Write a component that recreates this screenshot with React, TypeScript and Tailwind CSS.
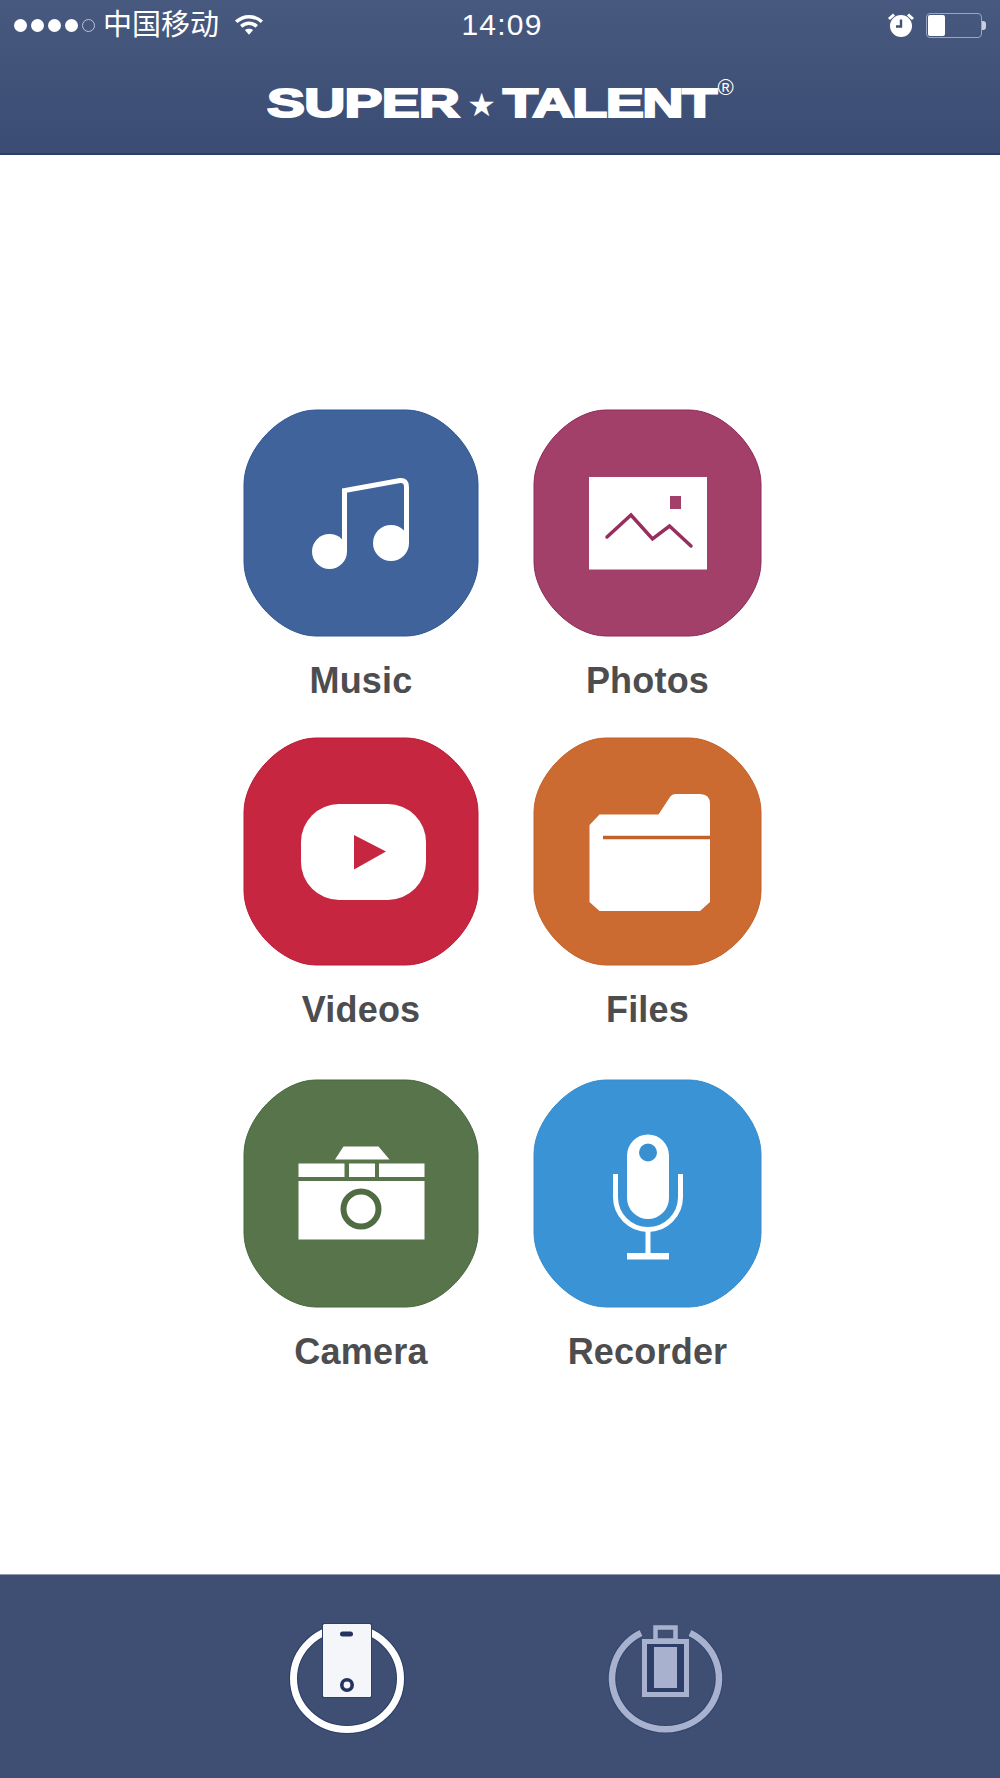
import React from "react";

function tilePath(w: number, h: number) {
  return `M73 1H${w - 73}C${w - 38} 1 ${w - 1} 40 ${w - 1} 75V${h - 75}C${w - 1} ${h - 40} ${w - 38} ${h - 1} ${w - 73} ${h - 1}H73C38 ${h - 1} 1 ${h - 40} 1 ${h - 75}V75C1 40 38 1 73 1Z`;
}

function Tile({ w, h, fill, edge, children }: { w: number; h: number; fill: string; edge: string; children: React.ReactNode }) {
  return (
    <svg width={w} height={h} viewBox={`0 0 ${w} ${h}`} className="block shrink-0">
      <path d={tilePath(w, h)} fill={fill} stroke={edge} strokeWidth="1" />
      {children}
    </svg>
  );
}

function Item({ label, w, children }: { label: string; w: number; children: React.ReactNode }) {
  return (
    <div className="flex flex-col items-center" style={{ width: w }}>
      {children}
      <div className="mt-[25px] text-[36px] leading-[38px] font-bold tracking-[0.2px] text-[#4d4d4f] whitespace-nowrap">{label}</div>
    </div>
  );
}

export default function App() {
  return (
    <div className="flex h-[1778px] w-[1000px] flex-col bg-white [font-family:'Liberation_Sans','Noto_Sans_CJK_SC',sans-serif]">
      <header className="h-[155px] shrink-0 border-b-2 border-[#2b3d6b] bg-gradient-to-b from-[#48597f] to-[#3b4c74] text-white">
        <div className="grid h-[50px] grid-cols-3 items-center px-[14px]">
          <div className="flex items-center">
            <div className="flex items-center gap-[4px]">
              <span className="h-[13px] w-[13px] rounded-full bg-white" />
              <span className="h-[13px] w-[13px] rounded-full bg-white" />
              <span className="h-[13px] w-[13px] rounded-full bg-white" />
              <span className="h-[13px] w-[13px] rounded-full bg-white" />
              <span className="h-[13px] w-[13px] rounded-full border border-[#b9c1d6]" />
            </div>
            <span className="ml-[8px] text-[29px] leading-[34px]">中国移动</span>
            <svg width="30" height="22" viewBox="0 0 32 24" className="ml-[15px]" fill="none" stroke="white" strokeWidth="3.8">
              <path d="M2 8.5C10 1 22 1 30 8.5" />
              <path d="M7.5 13.5C12.5 9 19.5 9 24.5 13.5" />
              <path d="M16 22.5L11.5 17.5C14 15.6 18 15.6 20.5 17.5Z" fill="white" stroke="none" />
            </svg>
          </div>
          <div className="pl-[4px] text-center text-[30px] leading-[34px] tracking-[1.2px]">14:09</div>
          <div className="flex items-center justify-end">
            <svg width="28" height="26" viewBox="0 0 28 26" className="mr-[11px]">
              <circle cx="14" cy="14" r="11" fill="white" />
              <path d="M14 7.5V14.5H9" fill="none" stroke="#3f5079" strokeWidth="2.4" />
              <path d="M2 7L7 2.5M26 7L21 2.5" stroke="white" strokeWidth="3" />
            </svg>
            <div className="flex items-center">
              <div className="h-[25px] w-[56px] rounded-[4px] border border-[#9aa5c2] p-px">
                <div className="h-full w-[17px] rounded-[2px] bg-white" />
              </div>
              <div className="h-[9px] w-[4px] rounded-r-[3px] bg-[#c9cfe0]" />
            </div>
          </div>
        </div>
        <div className="mt-[28px] flex h-[50px] items-start justify-center pl-[4px] font-bold leading-[50px]">
          <span className="inline-block w-[193px] origin-left scale-x-[1.42] text-[40px] tracking-[-0.5px] [-webkit-text-stroke:2px_white]">SUPER</span>
          <span className="ml-[7px] w-[30px] pt-[2px] text-center text-[32px] [font-family:'DejaVu_Sans',sans-serif]">★</span>
          <span className="ml-[6px] inline-block w-[213px] origin-left scale-x-[1.43] text-[40px] tracking-[-1px] [-webkit-text-stroke:2px_white]">TALENT</span>
          <span className="-mt-[15px] ml-[2px] w-[20px] text-[22px] font-normal">®</span>
        </div>
      </header>

      <main className="flex-1 pt-[254px] pl-[243px]">
        <div className="grid grid-cols-[236px_229px] grid-rows-[328px_342px_auto] gap-x-[54px]">
          <Item label="Music" w={236}>
            <Tile w={236} h={228} fill="#41639c" edge="#2f5694">
              <circle cx="86.5" cy="142.5" r="17.5" fill="white" />
              <circle cx="148" cy="134" r="18" fill="white" />
              <path d="M101.5 143V81.5L157 71.5Q163.5 71 163.5 78V134" fill="none" stroke="white" strokeWidth="5" />
            </Tile>
          </Item>
          <Item label="Photos" w={229}>
            <Tile w={229} h={228} fill="#a2406a" edge="#8f2b59">
              <rect x="56" y="68" width="118" height="92.5" fill="white" />
              <rect x="137" y="87" width="11" height="13" fill="#a2406a" />
              <path d="M74 128L98 106L119.5 130L136.5 117L158 137" fill="none" stroke="#962f5e" strokeWidth="3.5" strokeLinecap="round" />
            </Tile>
          </Item>
          <Item label="Videos" w={236}>
            <Tile w={236} h={229} fill="#c6263f" edge="#b91b38">
              <rect x="58" y="67" width="125" height="96" rx="38" fill="white" />
              <path d="M111 98L143 114.5L111 132.5Z" fill="#c6263f" />
            </Tile>
          </Item>
          <Item label="Files" w={229}>
            <Tile w={229} h={229} fill="#cc6b31" edge="#c4602a">
              <path d="M56.5 88L66.5 77.5H125.5L137 60Q139 57 143 57H167Q177 57 177 67V165L167 174H66.5L56.5 165Z" fill="white" />
              <path d="M70 100.5H177" stroke="#c4602a" strokeWidth="3.5" />
            </Tile>
          </Item>
          <Item label="Camera" w={236}>
            <Tile w={236} h={229} fill="#58744b" edge="#48683f">
              <path d="M92 80.5L100.5 67.5H135.5L146.5 80.5Z" fill="white" />
              <rect x="55.5" y="84.5" width="46" height="13.5" fill="white" />
              <rect x="106" y="84.5" width="26" height="13.5" fill="white" />
              <rect x="136" y="84.5" width="45.5" height="13.5" fill="white" />
              <rect x="55.5" y="102" width="126" height="58.5" fill="white" />
              <circle cx="118" cy="130" r="17.5" fill="white" stroke="#4f6c43" strokeWidth="6" />
            </Tile>
          </Item>
          <Item label="Recorder" w={229}>
            <Tile w={229} h={229} fill="#3a93d4" edge="#3a8bcb">
              <rect x="94" y="55.5" width="42" height="84.5" rx="21" fill="white" />
              <circle cx="115" cy="73.5" r="9" fill="#3a8fcf" />
              <path d="M82.5 95V118A32.5 32.5 0 0 0 147.5 118V95" fill="none" stroke="white" strokeWidth="5" />
              <path d="M115 150V175" stroke="white" strokeWidth="5" />
              <rect x="94" y="174" width="42" height="6.5" fill="white" />
            </Tile>
          </Item>
        </div>
      </main>

      <footer className="flex h-[204px] shrink-0 gap-[195px] border-t border-[#8d98b2] bg-[#3e4f73] pt-[44px] pl-[285px]">
        <svg width="124" height="116" viewBox="0 0 124 116" className="block shrink-0">
          <ellipse cx="62" cy="59.5" rx="53.5" ry="51" fill="none" stroke="#2a3c68" strokeWidth="9" />
          <ellipse cx="62" cy="59.5" rx="53.5" ry="51" fill="none" stroke="white" strokeWidth="7" />
          <rect x="37" y="4" width="50" height="75" fill="#2f4068" />
          <rect x="38" y="5" width="48" height="73" rx="1.5" fill="#f5f6fa" />
          <rect x="55" y="12.5" width="13" height="5" rx="2.5" fill="#22345f" />
          <circle cx="62" cy="66" r="5.2" fill="#f5f6fa" stroke="#22345f" strokeWidth="3.6" />
        </svg>
        <svg width="124" height="116" viewBox="0 0 124 116" className="block shrink-0">
          <path d="M37 14A53.5 51 0 1 0 86 14" fill="none" stroke="#33446e" strokeWidth="8.5" />
          <path d="M37 14A53.5 51 0 1 0 86 14" fill="none" stroke="#a8b2cf" strokeWidth="6.5" />
          <rect x="51.5" y="8.5" width="20" height="13" fill="#3e4f73" stroke="#a8b2cf" strokeWidth="4.5" />
          <rect x="40.5" y="22.5" width="42" height="53" fill="#2d3e68" stroke="#a8b2cf" strokeWidth="5" />
          <rect x="50" y="28" width="23" height="41" fill="#a8b2cf" />
        </svg>
      </footer>
    </div>
  );
}
